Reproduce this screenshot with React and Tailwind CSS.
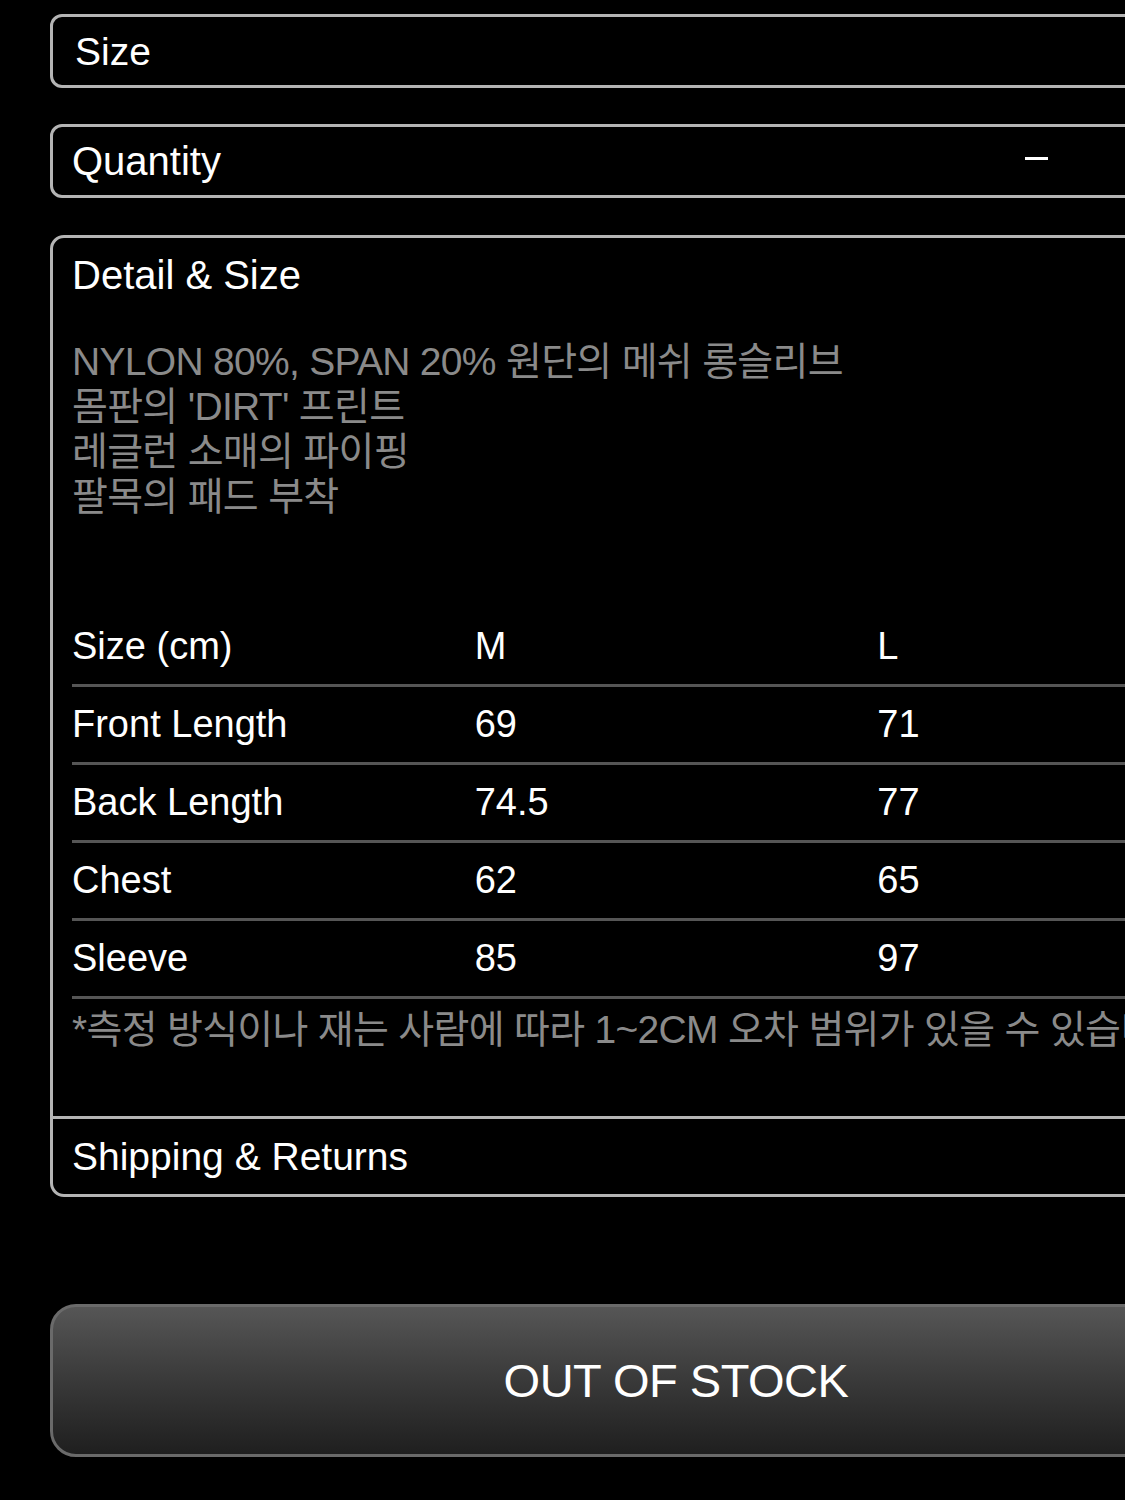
import React from 'react';

const rows = [
    { label: 'Front Length', m: '69', l: '71' },
    { label: 'Back Length', m: '74.5', l: '77' },
    { label: 'Chest', m: '62', l: '65' },
    { label: 'Sleeve', m: '85', l: '97' },
];

const details = [
    "NYLON 80%, SPAN 20% 원단의 메쉬 롱슬리브",
    "몸판의 'DIRT' 프린트",
    "레글런 소매의 파이핑",
    "팔목의 패드 부착",
];

const font = { fontFamily: '"Liberation Sans", "Noto Sans CJK KR", sans-serif' };

const App = () => {
    return (
        <div className="bg-black min-h-[1500px] w-[1125px] overflow-hidden text-white" style={font}>
            <div className="w-[1252px] ml-[50px] pt-[14px]">
                {/* Size */}
                <div className="h-[74px] border-[3px] border-[#b4b4b4] rounded-[12px] flex items-center pl-[22px]">
                    <span className="text-[39px] leading-none">Size</span>
                </div>

                {/* Quantity */}
                <div className="mt-[36px] h-[74px] border-[3px] border-[#b4b4b4] rounded-[12px] flex items-center pl-[19px]">
                    <span className="text-[40px] leading-none flex-1">Quantity</span>
                    <span className="w-[23px] h-[3px] bg-white mr-[251px] -mt-[6px]"></span>
                </div>

                {/* Detail & Size */}
                <div className="mt-[37px] border-[3px] border-[#b4b4b4] rounded-[14px]">
                    <div className="px-[19px]">
                        <div className="pt-[13px] h-[61px] text-[40px] leading-[48px]">Detail &amp; Size</div>

                        <div className="mt-[40px] text-[#8a8a8a] text-[39px] leading-[45px] tracking-[-0.7px]">
                            {details.map((line, i) => (
                                <div key={i}>{line}</div>
                            ))}
                        </div>

                        {/* Size table */}
                        <div className="mt-[90px] text-[38px]">
                            <div className="grid grid-cols-3 h-[78px] items-center border-b-[3px] border-[#555555]">
                                <span>Size (cm)</span>
                                <span>M</span>
                                <span>L</span>
                            </div>
                            {rows.map(r => (
                                <div key={r.label} className="grid grid-cols-3 h-[78px] items-center border-b-[3px] border-[#555555]">
                                    <span>{r.label}</span>
                                    <span>{r.m}</span>
                                    <span>{r.l}</span>
                                </div>
                            ))}
                        </div>

                        <div className="mt-[8px] h-[109px] text-[#8a8a8a] text-[39px] leading-[45px] tracking-[-0.7px] whitespace-nowrap">
                            *측정 방식이나 재는 사람에 따라 1~2CM 오차 범위가 있을 수 있습니다.
                        </div>
                    </div>

                    {/* Shipping & Returns */}
                    <div className="border-t-[3px] border-[#b4b4b4] h-[78px] flex items-center px-[19px]">
                        <span className="text-[39px] leading-none">Shipping &amp; Returns</span>
                    </div>
                </div>

                {/* Button */}
                <div className="mt-[107px] h-[153px] rounded-[26px] border-[3px] border-[#6a6a6a] bg-gradient-to-b from-[#565656] to-[#1f1f1f] flex items-center justify-center">
                    <span className="text-[47px] leading-none tracking-[-0.5px]">OUT OF STOCK</span>
                </div>
            </div>
        </div>
    );
};

export default App;
